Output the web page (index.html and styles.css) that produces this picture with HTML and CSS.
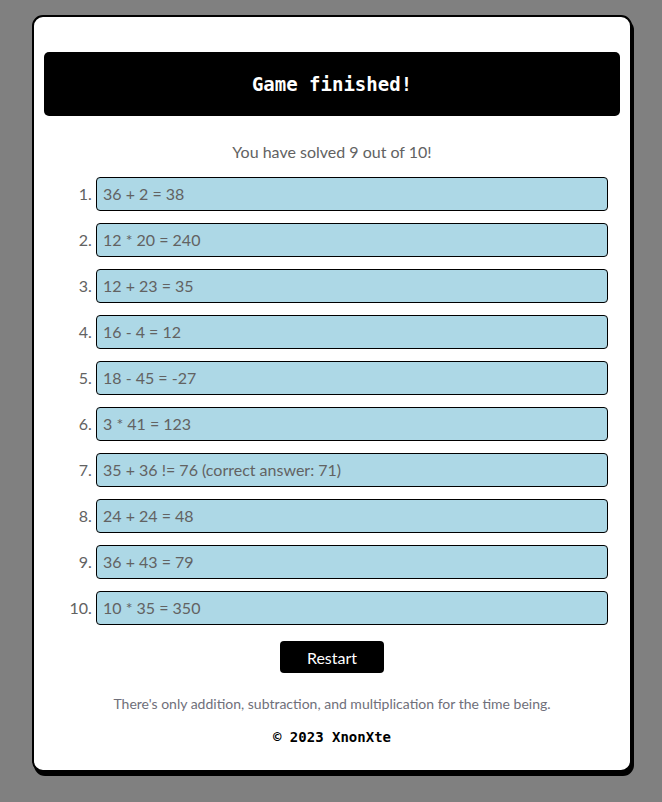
FILE: index.html
```html
<!DOCTYPE html>
<html lang="en">
<head>
<meta charset="utf-8">
<title>Game finished</title>
<link rel="stylesheet" href="styles.css">
</head>
<body>
<main class="card">
  <header class="banner"><h1 class="banner-title">Game finished!</h1></header>
  <p class="summary">You have solved 9 out of 10!</p>
  <ol class="results">
    <li><div class="result">36 + 2 = 38</div></li>
    <li><div class="result">12 * 20 = 240</div></li>
    <li><div class="result">12 + 23 = 35</div></li>
    <li><div class="result">16 - 4 = 12</div></li>
    <li><div class="result">18 - 45 = -27</div></li>
    <li><div class="result">3 * 41 = 123</div></li>
    <li><div class="result">35 + 36 != 76 (correct answer: 71)</div></li>
    <li><div class="result">24 + 24 = 48</div></li>
    <li><div class="result">36 + 43 = 79</div></li>
    <li><div class="result">10 * 35 = 350</div></li>
  </ol>
  <div class="actions"><button class="restart" type="button">Restart</button></div>
  <p class="note">There's only addition, subtraction, and multiplication for the time being.</p>
  <footer class="copyright">© 2023 XnonXte</footer>
</main>
</body>
</html>
```
FILE: styles.css
```css
html, body {
  margin: 0;
  padding: 0;
}
body {
  background: #808080;
  font-family: Lato, "Noto Sans", sans-serif;
  color: #626262;
  padding: 15px 0 26px 2px;
}
.card {
  box-sizing: border-box;
  width: 600px;
  margin: 0 auto;
  background: #fff;
  border: 2px solid #000;
  border-radius: 11px;
  box-shadow: 2px 4px 0 #000;
  padding: 35px 10px 24px;
}
.banner {
  background: #000;
  border-radius: 5px;
  padding: 20px 0;
  text-align: center;
}
.banner-title {
  margin: 0;
  font-family: "DejaVu Sans Mono", "Liberation Mono", monospace;
  font-weight: bold;
  font-size: 19px;
  line-height: 24px;
  color: #fff;
}
.summary {
  margin: 26px 0 0;
  text-align: center;
  font-size: 16px;
  line-height: 20px;
}
.results {
  margin: 15px 12px 0 0;
  padding-left: 52px;
  font-size: 16px;
  line-height: 20px;
}
.results li + li {
  margin-top: 12px;
}
.result {
  background: #add8e6;
  border: 1px solid #000;
  border-radius: 4px;
  padding: 6px;
}
.actions {
  display: flex;
  justify-content: center;
  margin-top: 16px;
}
.restart {
  width: 104px;
  height: 32px;
  background: #000;
  color: #fff;
  border: none;
  border-radius: 4px;
  font-family: Lato, "Noto Sans", sans-serif;
  font-size: 16px;
  padding: 0;
}
.note {
  margin: 22px 0 0;
  text-align: center;
  font-size: 14px;
  line-height: 18px;
  color: #6f6f7a;
}
.copyright {
  margin-top: 15px;
  text-align: center;
  font-family: "DejaVu Sans Mono", "Liberation Mono", monospace;
  font-weight: bold;
  font-size: 14px;
  line-height: 18px;
  color: #000;
}
```
